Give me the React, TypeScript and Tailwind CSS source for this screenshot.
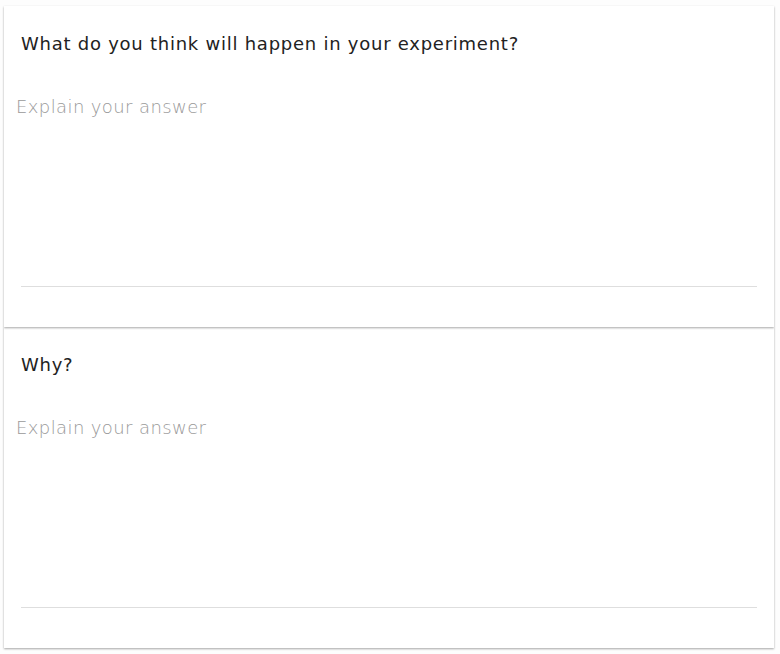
const QUESTIONS = [
  "What do you think will happen in your experiment?",
  "Why?",
];

function QuestionCard({ question, top }: { question: string; top: boolean }) {
  return (
    <div
      className={
        top
          ? "relative z-10 flex h-[321px] flex-col bg-white shadow-[0_1px_2px_rgba(0,0,0,0.35)]"
          : "relative flex h-[321px] flex-col bg-white shadow-[0_1px_2px_rgba(0,0,0,0.35)]"
      }
    >
      <h2 className="pl-[17px] pt-[27px] text-[18px] leading-[22px] font-normal tracking-[0.75px] text-[#222]">
        {question}
      </h2>
      <div className="pl-[12px] pt-[40px] text-[18px] leading-[24px] font-extralight tracking-[0.4px] text-[#999]">
        Explain your answer
      </div>
      <div className="mt-auto mb-[40px] ml-[17px] mr-[17px] h-px bg-[#dedede]" />
    </div>
  );
}

export default function App() {
  return (
    <div className="min-h-[654px] bg-[#fdfdfd] px-[4px] pt-[6px] font-['DejaVu_Sans',sans-serif]">
      <div className="flex w-[770px] flex-col">
        {QUESTIONS.map((q, i) => (
          <QuestionCard key={q} question={q} top={i === 0} />
        ))}
      </div>
    </div>
  );
}
